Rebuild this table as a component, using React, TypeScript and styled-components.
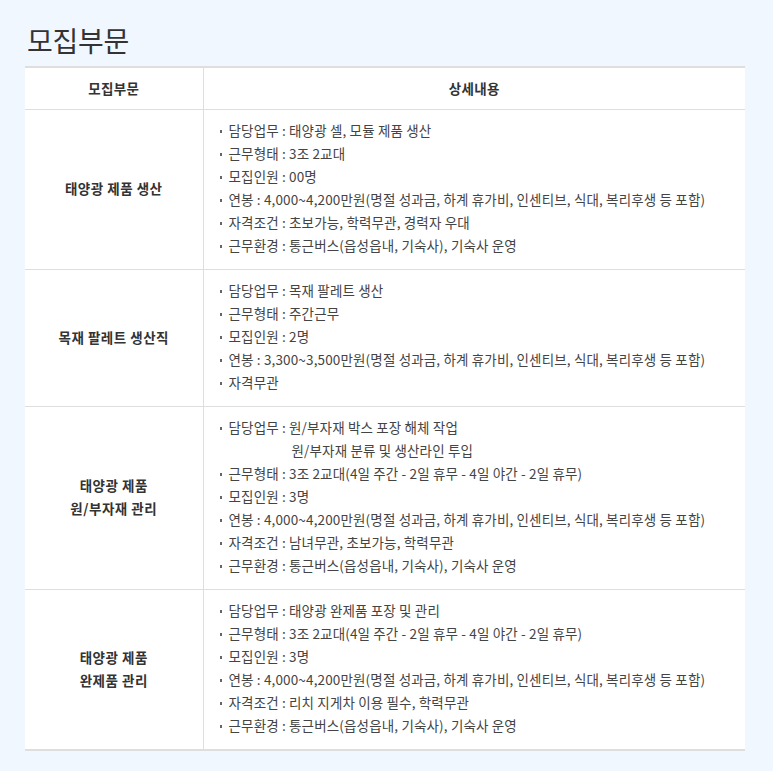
import React from "react";
import styled, { createGlobalStyle } from "styled-components";

const GlobalStyle = createGlobalStyle`
  html, body {
    margin: 0;
    padding: 0;
    background: #f1f7fe;
  }
  body {
    font-family: "Noto Sans CJK KR", "Noto Sans", sans-serif;
    color: #444;
  }
  * {
    box-sizing: border-box;
  }
`;

const Section = styled.section`
  width: 773px;
  padding: 20px 28px 22px 25px;
`;

const Title = styled.h2`
  margin: 0 0 6px 2px;
  font-size: 28px;
  font-weight: 400;
  line-height: 40px;
  color: #333;
  letter-spacing: -0.3px;
`;

const Table = styled.table`
  width: 720px;
  border-collapse: collapse;
  background: #fff;
  border-top: 2px solid #dedede;
  border-bottom: 2px solid #dedede;
  table-layout: fixed;
`;

const HeadCell = styled.th<{ $w?: number }>`
  height: 42px;
  padding: 0 0 1px;
  font-size: 13.5px;
  font-weight: 700;
  color: #333;
  text-align: center;
  border-bottom: 1px solid #dedede;
  letter-spacing: 0.3px;
  ${p => p.$w && `width: ${p.$w}px;`}

  & + & {
    border-left: 1px solid #dedede;
  }
`;

const Row = styled.tr`
  & + & td {
    border-top: 1px solid #dedede;
  }
`;

const NameCell = styled.td`
  padding: 10px 0 11px;
  font-size: 13.5px;
  font-weight: 700;
  line-height: 23px;
  color: #333;
  text-align: center;
  vertical-align: middle;
  border-right: 1px solid #dedede;
  letter-spacing: 0.5px;
`;

const DetailCell = styled.td`
  padding: 9px 14px 12px;
  vertical-align: middle;
`;

const List = styled.ul`
  margin: 0;
  padding: 0;
  list-style: none;
`;

const Item = styled.li<{ $indent?: boolean }>`
  position: relative;
  padding-left: ${p => (p.$indent ? "74px" : "11px")};
  font-size: 13.5px;
  line-height: 23px;
  color: #444;
  letter-spacing: 0.15px;
  white-space: nowrap;

  ${p =>
    !p.$indent &&
    `
    &::before {
      content: "";
      position: absolute;
      left: 2px;
      top: 11px;
      width: 2px;
      height: 3px;
      background: #666;
    }
  `}
`;

type Line = { text: string; indent?: boolean };
type Job = { name: string[]; lines: Line[] };

const jobs: Job[] = [
  {
    name: ["태양광 제품 생산"],
    lines: [
      { text: "담당업무 : 태양광 셀, 모듈 제품 생산" },
      { text: "근무형태 : 3조 2교대" },
      { text: "모집인원 : 00명" },
      { text: "연봉 : 4,000~4,200만원(명절 성과금, 하계 휴가비, 인센티브, 식대, 복리후생 등 포함)" },
      { text: "자격조건 : 초보가능, 학력무관, 경력자 우대" },
      { text: "근무환경 : 통근버스(읍성읍내, 기숙사), 기숙사 운영" },
    ],
  },
  {
    name: ["목재 팔레트 생산직"],
    lines: [
      { text: "담당업무 : 목재 팔레트 생산" },
      { text: "근무형태 : 주간근무" },
      { text: "모집인원 : 2명" },
      { text: "연봉 : 3,300~3,500만원(명절 성과금, 하계 휴가비, 인센티브, 식대, 복리후생 등 포함)" },
      { text: "자격무관" },
    ],
  },
  {
    name: ["태양광 제품", "원/부자재 관리"],
    lines: [
      { text: "담당업무 : 원/부자재 박스 포장 해체 작업" },
      { text: "원/부자재 분류 및 생산라인 투입", indent: true },
      { text: "근무형태 : 3조 2교대(4일 주간 - 2일 휴무 - 4일 야간 - 2일 휴무)" },
      { text: "모집인원 : 3명" },
      { text: "연봉 : 4,000~4,200만원(명절 성과금, 하계 휴가비, 인센티브, 식대, 복리후생 등 포함)" },
      { text: "자격조건 : 남녀무관, 초보가능, 학력무관" },
      { text: "근무환경 : 통근버스(읍성읍내, 기숙사), 기숙사 운영" },
    ],
  },
  {
    name: ["태양광 제품", "완제품 관리"],
    lines: [
      { text: "담당업무 : 태양광 완제품 포장 및 관리" },
      { text: "근무형태 : 3조 2교대(4일 주간 - 2일 휴무 - 4일 야간 - 2일 휴무)" },
      { text: "모집인원 : 3명" },
      { text: "연봉 : 4,000~4,200만원(명절 성과금, 하계 휴가비, 인센티브, 식대, 복리후생 등 포함)" },
      { text: "자격조건 : 리치 지게차 이용 필수, 학력무관" },
      { text: "근무환경 : 통근버스(읍성읍내, 기숙사), 기숙사 운영" },
    ],
  },
];

export default function App() {
  return (
    <>
      <GlobalStyle />
      <Section>
        <Title>모집부문</Title>
        <Table>
          <thead>
            <tr>
              <HeadCell $w={178}>모집부문</HeadCell>
              <HeadCell>상세내용</HeadCell>
            </tr>
          </thead>
          <tbody>
            {jobs.map((job, i) => (
              <Row key={i}>
                <NameCell>
                  {job.name.map((n, j) => (
                    <div key={j}>{n}</div>
                  ))}
                </NameCell>
                <DetailCell>
                  <List>
                    {job.lines.map((l, j) => (
                      <Item key={j} $indent={l.indent}>
                        {l.text}
                      </Item>
                    ))}
                  </List>
                </DetailCell>
              </Row>
            ))}
          </tbody>
        </Table>
      </Section>
    </>
  );
}
